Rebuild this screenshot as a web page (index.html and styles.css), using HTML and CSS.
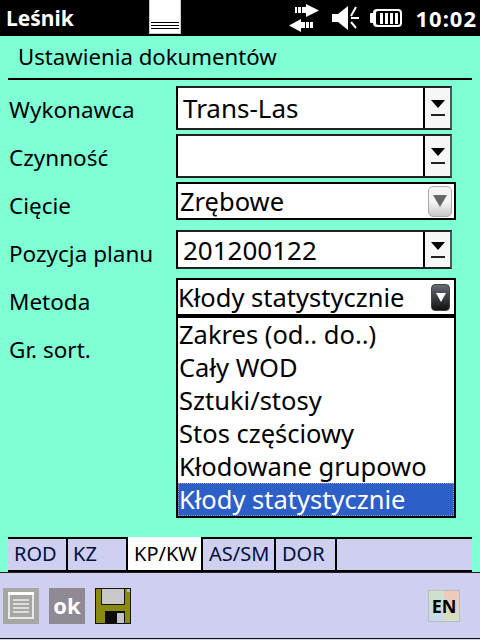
FILE: index.html
```html
<!DOCTYPE html>
<html lang="pl">
<head>
    <meta charset="UTF-8">
    <meta name="viewport" content="width=device-width, initial-scale=1.0">
    <title>Leśnik</title>
    <link rel="stylesheet" href="styles.css">
</head>
<body>

    <header class="status-bar">
        <span class="app-name">Leśnik</span>
        <div class="sip-tab"><i></i><i></i><i></i></div>
        <div class="status-icons">
            <svg class="icon-net" width="32" height="30" viewBox="0 0 32 30">
                <path d="M18 1l13 6.500-13 6.500v-4h-4v-6h4z" fill="#fff"/>
                <path d="M7 4h2v6H7zM10 4h3v6h-3z" fill="#fff"/>
                <path d="M1 22.500l12-6.500v3h4v6h-4v4z" fill="#fff"/>
                <path d="M18 19h3v6h-3zM22 19h3v6h-3z" fill="#fff"/>
            </svg>
            <svg class="icon-sound" width="28" height="28" viewBox="0 0 28 28">
                <path d="M0 10h6l10-8v24L6 18H0z" fill="#fff"/>
                <path d="M19 12l5-9M19 14h8M19 18l5 6" stroke="#fff" stroke-width="2" fill="none"/>
            </svg>
            <svg class="icon-battery" width="33" height="18" viewBox="0 0 33 18">
                <rect x="3" y="0" width="29" height="18" rx="4" fill="#fff"/>
                <rect x="0" y="4" width="5" height="10" rx="1" fill="#fff"/>
                <rect x="6" y="2" width="24" height="14" rx="2" fill="#000"/>
                <path d="M10 4h3v11h-3zM15 4h3v11h-3zM20 4h3v11h-3zM25 4h3v11h-3z" fill="#fff"/>
            </svg>
            <span class="clock">10:02</span>
        </div>
    </header>

    <main class="form-area">
        <h1 class="form-title">Ustawienia dokumentów</h1>

        <div class="form-row">
            <label>Wykonawca</label>
            <div class="combo combo-edit">
                <span class="combo-text">Trans-Las</span>
                <span class="combo-btn"><b></b><u></u></span>
            </div>
        </div>
        <div class="form-row">
            <label>Czynność</label>
            <div class="combo combo-edit">
                <span class="combo-text"></span>
                <span class="combo-btn"><b></b><u></u></span>
            </div>
        </div>
        <div class="form-row">
            <label>Cięcie</label>
            <div class="combo combo-list">
                <span class="combo-text">Zrębowe</span>
                <span class="arrow-off"><b></b></span>
            </div>
        </div>
        <div class="form-row">
            <label>Pozycja planu</label>
            <div class="combo combo-edit combo-short">
                <span class="combo-text">201200122</span>
                <span class="combo-btn"><b></b><u></u></span>
            </div>
        </div>
        <div class="form-row">
            <label>Metoda</label>
            <div class="combo combo-list combo-open">
                <span class="combo-text">Kłody statystycznie</span>
                <span class="arrow-on"><b></b></span>
                <ul class="dropdown">
                    <li>Zakres (od.. do..)</li>
                    <li>Cały WOD</li>
                    <li>Sztuki/stosy</li>
                    <li>Stos częściowy</li>
                    <li>Kłodowane grupowo</li>
                    <li class="selected">Kłody statystycznie</li>
                </ul>
            </div>
        </div>
        <div class="form-row">
            <label>Gr. sort.</label>
        </div>
    </main>

    <nav class="tabs">
        <span class="tab tab-rod">ROD</span>
        <span class="tab tab-kz">KZ</span>
        <span class="tab tab-kp active">KP/KW</span>
        <span class="tab tab-as">AS/SM</span>
        <span class="tab tab-dor">DOR</span>
    </nav>

    <footer class="toolbar">
        <svg class="tool-list" width="36" height="36" viewBox="0 0 36 36">
            <rect width="36" height="36" fill="#a6a6a2"/>
            <path d="M5 4h26v3H5z" fill="#fff"/>
            <path d="M6 7v23h24V7" stroke="#e8e8e8" stroke-width="2" fill="none"/>
            <path d="M10 11h16v2H10zM10 15h16v2H10zM10 19h16v2H10zM10 23h16v2H10z" fill="#ddd"/>
        </svg>
        <div class="tool-ok">ok</div>
        <svg class="tool-save" width="36" height="36" viewBox="0 0 36 36">
            <path d="M0 0h36v36H0z" fill="#141408"/>
            <path d="M1 1h34v34H1z" fill="#8a8a10"/>
            <path d="M6 0h24v17H6z" fill="#141408"/>
            <path d="M7 1h22v15H7z" fill="#c8c8c8"/>
            <path d="M32 1h3v3h-3z" fill="#bbb"/>
            <path d="M10 23h20v13H10z" fill="#0c0c0c"/>
            <path d="M22 25h7v10h-7z" fill="#c4c4c4"/>
        </svg>
        <div class="lang">EN</div>
    </footer>

</body>
</html>
```

FILE: styles.css
```css
html, body { margin: 0; padding: 0; }
body { width: 480px; height: 640px; overflow: hidden; background: #7fffd4; font-family: "Noto Sans", sans-serif; color: #000; display: flex; flex-direction: column; }

.status-bar { height: 36px; background: #000; color: #fff; display: flex; align-items: center; }
.app-name { font-weight: bold; font-size: 21px; margin-left: 6px; width: 143px; }
.sip-tab { width: 32px; height: 34px; background: #fff; align-self: flex-start; display: flex; flex-direction: column; justify-content: flex-end; gap: 2px; box-sizing: border-box; padding: 0 1px 4px; border: 1px solid #ccc; border-top: 0; }
.sip-tab i { display: block; height: 1px; background: #000; }
.status-icons { margin-left: auto; display: flex; align-items: center; }
.icon-net { margin-right: 12px; }
.icon-sound { margin-right: 10px; }
.icon-battery { margin-right: 12px; }
.clock { font-weight: bold; font-size: 22px; letter-spacing: 1px; margin-right: 3px; }

.form-area { flex: 1; padding: 0 8px; }
.form-title { margin: 0 0 6px; font-weight: normal; font-size: 22.2px; height: 44px; line-height: 42px; padding-left: 10px; border-bottom: 2px solid #000; box-sizing: border-box; }
.form-row { display: flex; height: 48px; }
.form-row label { width: 168px; font-size: 22.5px; padding: 8px 0 0 1px; box-sizing: border-box; }

.combo { width: 280px; height: 38px; box-sizing: border-box; border: 2px solid #000; background: #fff; display: flex; align-items: center; font-size: 25.5px; position: relative; }
.combo-text { flex: 1; white-space: nowrap; }
.combo-edit { width: 276px; height: 44px; border-right-color: #555; border-top-color: #222; border-bottom-color: #222; font-size: 26px; }
.combo-edit .combo-text { padding-left: 5px; }
.combo-short { height: 39px; }
.combo-list .combo-text { padding-left: 2px; }
.combo-open .combo-text { padding-left: 0; }
.combo-btn { width: 25px; height: 100%; border-left: 2px solid #000; background: #f6f6f6; display: flex; flex-direction: column; align-items: center; justify-content: center; gap: 6px; }
.combo-btn b { border-left: 7px solid transparent; border-right: 7px solid transparent; border-top: 8px solid #000; }
.combo-btn u { width: 14px; height: 2px; background: #222; }

.arrow-off { width: 24px; height: 31px; border-radius: 5px; margin-right: 2px; display: flex; align-items: center; justify-content: center; box-sizing: border-box; background: linear-gradient(#f4f4f4 50%, #c8c8c8); border: 1px solid #aaa; }
.arrow-off b { border-left: 7px solid transparent; border-right: 7px solid transparent; border-top: 12px solid #666; }
.arrow-on { width: 19px; height: 27px; border-radius: 4px; margin-right: 4px; display: flex; align-items: center; justify-content: center; box-sizing: border-box; background: linear-gradient(#666c74, #111); border: 1px solid #444; }
.arrow-on b { border-left: 5px solid transparent; border-right: 5px solid transparent; border-top: 9px solid #fff; }

.dropdown { list-style: none; margin: 0; padding: 0; position: absolute; left: -2px; right: -2px; top: 36px; background: #fff; border: 2px solid #000; z-index: 2; }
.dropdown li { height: 33px; line-height: 33px; padding-left: 1px; }
.dropdown .selected { background: #2d5fc8; color: #fff; outline: 1px dotted #99a; outline-offset: -1px; }

.tabs { height: 35px; margin: 0 8px; background: #cfcff0; border-top: 2px solid #000; border-bottom: 2px solid #000; display: flex; font-size: 20px; box-sizing: border-box; }
.tab { box-sizing: border-box; padding-left: 6px; line-height: 30px; border-right: 2px solid #000; color: #001040; }
.tab-rod { width: 60px; }
.tab-kz { width: 60px; padding-left: 5px; }
.tab-kp { width: 75px; }
.tab-as { width: 73px; }
.tab-dor { width: 61px; }
.tab.active { background: #fff; margin-top: -2px; padding-top: 2px; color: #000; }

.toolbar { height: 68px; background: #cfcff0; display: flex; align-items: flex-start; padding-left: 3px; border-top: 1px solid #222; box-sizing: border-box; box-shadow: inset 0 -1px 0 #cfcff0, inset 0 -2px 0 #111; }
.tool-list { margin-top: 15px; }
.tool-ok { width: 36px; height: 36px; margin: 15px 0 0 10px; background: #8f8a94; color: #fff; font-weight: bold; font-size: 22px; text-align: center; line-height: 34px; }
.tool-save { margin: 15px 0 0 10px; }
.lang { margin: 17px 20px 0 auto; width: 32px; height: 32px; box-sizing: border-box; border: 1px solid #bdbdb8; background: linear-gradient(#cfe3c8, #c8d8ec) left / 50% 100% no-repeat, linear-gradient(#f2c6b8, #d2e0c4) right / 50% 100% no-repeat; font-weight: bold; font-size: 18px; text-align: center; line-height: 30px; }
```
